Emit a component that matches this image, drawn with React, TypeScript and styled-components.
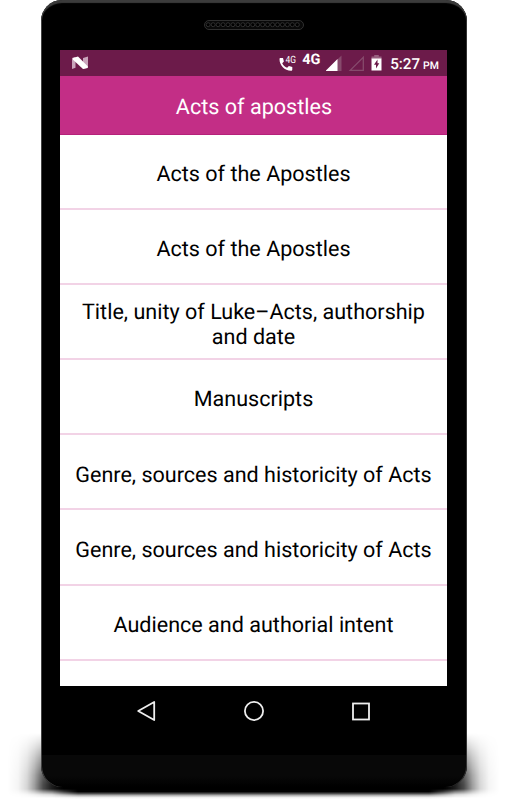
import React from 'react';
import styled, { createGlobalStyle } from 'styled-components';

const GlobalStyle = createGlobalStyle`
  * { box-sizing: border-box; }
  body { margin: 0; background: #fff; overflow: hidden; }
`;

const Stage = styled.main`
  position: relative;
  isolation: isolate;
  width: 507px;
  height: 800px;
  padding-left: 41px;
  overflow: hidden;
  background: #fff;
  font-family: Roboto, 'Liberation Sans', sans-serif;
  text-rendering: geometricPrecision;
`;

const SideShadow = styled.div<{ $side: 'left' | 'right' }>`
  position: absolute;
  z-index: -1;
  top: 733px;
  ${(p) => p.$side}: 8px;
  width: 70px;
  height: 65px;
  background: linear-gradient(
    ${(p) => (p.$side === 'left' ? 'to right' : 'to left')},
    rgba(0, 0, 0, 0) 0%,
    rgba(0, 0, 0, 0.04) 14%,
    rgba(0, 0, 0, 0.16) 27%,
    rgba(0, 0, 0, 0.38) 38%,
    rgba(0, 0, 0, 0.7) 50%,
    rgba(0, 0, 0, 0.88) 62%,
    #000 80%
  );
  mask-image: linear-gradient(
    to bottom,
    transparent 0%,
    rgba(0, 0, 0, 0.15) 12%,
    rgba(0, 0, 0, 0.55) 38%,
    rgba(0, 0, 0, 0.9) 65%,
    #000 80%,
    #000 86%,
    rgba(0, 0, 0, 0.5) 91%,
    rgba(0, 0, 0, 0.15) 95%,
    transparent 100%
  );
`;

const BottomShadow = styled.div`
  position: absolute;
  z-index: -1;
  left: 52px;
  right: 52px;
  top: 778px;
  height: 21px;
  background: linear-gradient(to bottom, #000 0%, #000 65%, #555 75%, #aaa 82%, #eee 92%, #fff 100%);
  mask-image: linear-gradient(to right, transparent 0, #000 26px, #000 calc(100% - 26px), transparent 100%);
`;

const Phone = styled.div`
  display: flex;
  flex-direction: column;
  align-items: center;
  width: 425.5px;
  height: 787px;
  border-radius: 21px;
  background: linear-gradient(to bottom, #000 755px, #080808 755px, #080808 776px, #000 787px);
  box-shadow: inset 0 4px 1px -1px #3b3b3b, inset 1px 0 0 #444, inset -1px 0 0 #333;
`;

const Bezel = styled.div`
  display: flex;
  flex: none;
  justify-content: center;
  width: 100%;
  height: 50px;
  padding-top: 20px;
`;

const Speaker = styled.div`
  width: 100px;
  height: 10px;
  border: 1.5px solid #303030;
  border-radius: 5px;
  background: #090909;
  overflow: hidden;
  display: flex;
`;

const Screen = styled.section`
  display: flex;
  flex: none;
  flex-direction: column;
  width: 387px;
  height: 636px;
  margin-right: 0.5px;
  overflow: hidden;
  background: #fff;
`;

const StatusBar = styled.div`
  display: flex;
  flex: none;
  align-items: flex-start;
  justify-content: space-between;
  height: 26px;
  padding: 0 8px 0 12px;
  background: #6c1b4a;
  color: #fff;
`;

const StatusGroup = styled.div`
  display: flex;
  align-items: flex-start;
`;

const NetworkLabel = styled.span`
  width: 19px;
  margin: 2px 5px 0 5px;
  font-size: 14.5px;
  font-weight: 700;
  line-height: 16px;
`;

const Clock = styled.span`
  margin-left: 8px;
  padding-top: 4px;
  font-size: 15.2px;
  font-weight: 500;
  line-height: 20px;
  white-space: nowrap;
`;

const Meridiem = styled.span`
  margin-left: 3px;
  font-size: 10.5px;
`;

const TitleBar = styled.header`
  display: flex;
  flex: none;
  align-items: center;
  justify-content: center;
  height: 58.5px;
  padding: 5.5px 0 0 1px;
  background: #c32e86;
  border-bottom: 1px solid #b5217a;
  color: #fff;
`;

const Title = styled.h1`
  margin: 0;
  font-size: 21.6px;
  font-weight: 400;
  line-height: 26px;
`;

const ChapterList = styled.ul`
  flex: none;
  margin: 0;
  padding: 0;
  list-style: none;
`;

const Chapter = styled.li`
  display: flex;
  align-items: center;
  justify-content: center;
  height: 75.2px;
  padding: 6.4px 12px 0;
  border-bottom: 2px solid #f2d3e6;
  color: #000;
  font-size: 21.55px;
  line-height: 25px;
  text-align: center;
`;

const NavBar = styled.nav`
  display: flex;
  flex: none;
  align-items: center;
  justify-content: space-around;
  width: 322px;
  height: 50px;
`;

const NavButton = styled.button`
  display: flex;
  width: 24px;
  height: 24px;
  padding: 0;
  border: 0;
  background: none;
`;

const chapters = [
  'Acts of the Apostles',
  'Acts of the Apostles',
  'Title, unity of Luke–Acts, authorship and date',
  'Manuscripts',
  'Genre, sources and historicity of Acts',
  'Genre, sources and historicity of Acts',
  'Audience and authorial intent',
];

const NougatIcon = () => (
  <svg width="17" height="26" viewBox="0 0 17 26">
    <path d="M0 8 3.500 7v10.700L0 19zM11 8 16 6.500v11L11 19z" fill="#c9a4bb" />
    <path d="M1 8 6 6.500 15.700 16.300V18L11 19 1 9.800z" fill="#fff" />
  </svg>
);

const CallIcon = () => (
  <svg width="18" height="26" viewBox="0 0 18 26">
    <path
      d="M1.500 8H4l.9 3.400-1.700 1.900c1 2.100 2.700 3.500 4.900 4.500l1.800-1.700 3.400.9v2.500c0 .8-.5 1.300-1.300 1.300C5.600 20.800.5 15.700.5 9.100.5 8.400.8 8 1.500 8z"
      fill="#fff"
    />
    <text x="6.500" y="13" fill="#fff" fontSize="10" fontWeight="400" textLength="10.500" lengthAdjust="spacingAndGlyphs">4G</text>
  </svg>
);

const SignalIcons = () => (
  <svg width="40" height="26" viewBox="0 0 40 26">
    <path d="M15.500 5.500V21H-.5z" fill="#864a6c" />
    <path d="M11.500 9V21H-.5z" fill="#fff" />
    <path d="M37.300 7.300V20.300H24.200z" fill="none" stroke="#864a6c" strokeWidth="1.300" />
  </svg>
);

const BatteryIcon = () => (
  <svg width="11" height="26" viewBox="0 0 11 26">
    <path d="M3.200 5h4.600v1.500h2.700V9H.5V6.500h2.700z" fill="#986080" />
    <path d="M.5 8.500h10v12H.5z" fill="#fff" />
    <path d="M6.500 9.500 3 14.700h2v3.800l3.300-5.200H6.500z" fill="#6c1b4a" />
  </svg>
);

const StatusGap = styled.span`
  width: 5px;
`;

const holes = Array.from({ length: 19 }, (_, i) => 3.2 + i * 4.95);

export default function App() {
  return (
    <>
      <GlobalStyle />
      <Stage>
        <SideShadow $side="left" />
        <SideShadow $side="right" />
        <BottomShadow />
        <Phone>
          <Bezel>
            <Speaker>
              <svg width="97" height="7" viewBox="0 0 97 7">
                {holes.map((x) => (
                  <circle key={x} cx={x} cy="3.700" r="2" fill="#000" stroke="#303030" />
                ))}
              </svg>
            </Speaker>
          </Bezel>
          <Screen>
            <StatusBar>
              <NougatIcon />
              <StatusGroup>
                <CallIcon />
                <NetworkLabel>4G</NetworkLabel>
                <SignalIcons />
                <StatusGap />
                <BatteryIcon />
                <Clock>
                  5:27<Meridiem>PM</Meridiem>
                </Clock>
              </StatusGroup>
            </StatusBar>
            <TitleBar>
              <Title>Acts of apostles</Title>
            </TitleBar>
            <ChapterList>
              {chapters.map((name, i) => (
                <Chapter key={i}>{name}</Chapter>
              ))}
            </ChapterList>
          </Screen>
          <NavBar>
            <NavButton aria-label="Back">
              <svg width="24" height="24" viewBox="0 0 24 24">
                <path d="M20.200 3v18L4.200 12z" fill="none" stroke="#eee" strokeWidth="1.800" strokeLinejoin="round" />
              </svg>
            </NavButton>
            <NavButton aria-label="Home">
              <svg width="24" height="24" viewBox="0 0 24 24">
                <circle cx="12" cy="12" r="9.100" fill="none" stroke="#eee" strokeWidth="1.800" />
              </svg>
            </NavButton>
            <NavButton aria-label="Recent apps">
              <svg width="24" height="24" viewBox="0 0 24 24">
                <rect x="4" y="4.500" width="16" height="16" fill="none" stroke="#eee" strokeWidth="1.800" />
              </svg>
            </NavButton>
          </NavBar>
        </Phone>
      </Stage>
    </>
  );
}
